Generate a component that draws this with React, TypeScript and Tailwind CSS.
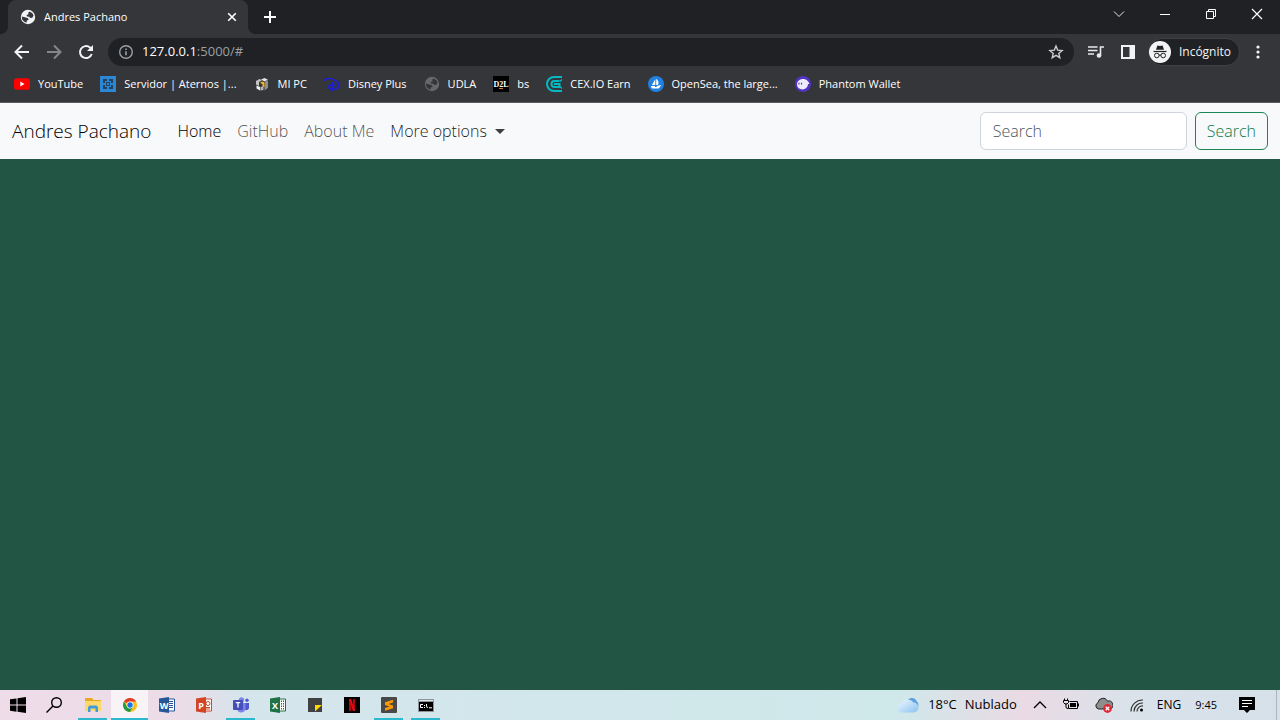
import type { ReactNode } from 'react'

type Bookmark = { label: string; icon: ReactNode }

function GlobeIcon({ className, land }: { className: string; land: string }) {
  return (
    <svg viewBox="0 0 16 16" className={className} aria-hidden="true">
      <circle cx="8" cy="8" r="7.2" fill="currentColor" />
      <path d="M9.500 2.600 12.400 4.200 13.600 6.500 12.300 8.800 10 9 9.400 7.800 7 7.600 6.600 6 8.600 5.200 8.200 3.800Z" fill={land} />
      <path d="M1.800 7.500 5 8.200 8 9.300 8.700 10.800 6.900 11.600 6.400 13.800 4 12.600 2.200 10.400Z" fill={land} />
    </svg>
  )
}

const bookmarks: Bookmark[] = [
  {
    label: 'YouTube',
    icon: (
      <svg viewBox="0 0 16 16" className="size-4">
        <rect y="2.3" width="16" height="11.4" rx="2.8" fill="#f00" />
        <path d="M6.3 5.6v4.8L10.5 8Z" fill="#fff" />
      </svg>
    ),
  },
  {
    label: 'Servidor | Aternos |...',
    icon: (
      <svg viewBox="0 0 16 16" className="size-4">
        <path d="M0 0h16v16H0Z" fill="#2b87d3" />
        <path d="M3 3h4v2H5v2H3ZM9 3h4v4h-2V5H9ZM3 9h2v2h2v2H3ZM11 9h2v4H9v-2h2ZM6 6h4v4H6Z" fill="#24405c" />
        <path d="M7 7h2v2H7Z" fill="#2b87d3" />
      </svg>
    ),
  },
  {
    label: 'MI PC',
    icon: (
      <svg viewBox="0 0 16 16" className="size-4">
        <path d="M2 5 5.500 3 8 4.200 5 6v4L2 8.500Z" fill="#c4c4c4" />
        <path d="M7 3.500 10.500 2 14 3.800 10.500 5.500Z" fill="#e4e4e4" />
        <path d="M11 5.800 14 4.200v7.600l-3.500 2.700Z" fill="#8f8f8f" />
        <path d="M2.500 9.500 6 11v3.500L2.500 12.500Z" fill="#f1f1f1" />
        <path d="M6.500 11 9.500 10v4L6.500 14.500Z" fill="#b3b3b3" />
        <path d="M6 6.500 8.500 5.500 10.500 6.500v5L8.500 10V8.200Z" fill="#f5b91f" />
      </svg>
    ),
  },
  {
    label: 'Disney Plus',
    icon: (
      <svg viewBox="0 0 16 16" className="size-4" fill="none" stroke="#1d1ddb" strokeLinecap="round">
        <path d="M1 4.800C.2 3.500 2 2.500 5 2.600c5 .2 10 3.400 10 7 0 3.200-5.500 4.600-9 3.200-2.200-.9-2.300-3 .2-3.600 2-.4 4-.2 5.300.5" strokeWidth="1.500" />
        <path d="M8.500 6.500C8 8.500 8 11.500 8.300 14.500" strokeWidth="1.500" />
      </svg>
    ),
  },
  { label: 'UDLA', icon: <GlobeIcon className="size-4 text-[#66686b]" land="#35363a" /> },
  {
    label: 'bs',
    icon: (
      <svg viewBox="0 0 16 16" className="size-4">
        <path d="M0 0h16v16H0Z" fill="#000" />
        <text x="8" y="11" fontSize="8" textAnchor="middle" fill="#fff" className="font-['Liberation_Serif',serif] font-bold">D2L</text>
        <path d="M6 12h4v1H6Z" fill="#d97920" />
      </svg>
    ),
  },
  {
    label: 'CEX.IO Earn',
    icon: (
      <svg viewBox="0 0 16 16" className="size-4" fill="none" stroke="#05b9c2" strokeWidth="2">
        <path d="M16 1H8a7 7 0 0 0 0 14h8" />
        <path d="M13.500 5H8.500a3 3 0 0 0 0 6h5V8H8" />
        <path d="M14 5.500 16 3.500M14 10.500l2 2" strokeWidth="1.500" />
      </svg>
    ),
  },
  {
    label: 'OpenSea, the large...',
    icon: (
      <svg viewBox="0 0 16 16" className="size-4">
        <circle cx="8" cy="8" r="8" fill="#2081e2" />
        <path d="M7.300 3.200v5.900H3.900ZM8.200 2.800C10.600 4.800 11.200 7 9.800 9.100H8.200ZM3 9.900h4v1h1.700v-1L13 9c-.3 1.200-1 1.700-1.500 2.500-.5.800-.9 1.100-1.600 1.100H5.500C4 12.500 3 11.500 3 9.900Z" fill="#fff" />
      </svg>
    ),
  },
  {
    label: 'Phantom Wallet',
    icon: (
      <svg viewBox="0 0 16 16" className="size-4">
        <circle cx="8" cy="8" r="8" fill="#5234c2" />
        <path d="M2 8.800C1.800 5.500 4.500 3 8 3c3.500 0 5.500 2.300 6.500 5H13c0 3-2.500 5.400-5.500 5.400-2.900 0-5.200-1.600-5.500-4.600Z" fill="#eeebfb" />
        <path d="M4 6.800v1.800M6.500 6.800v1.800" stroke="#5234c2" strokeWidth="1.200" />
      </svg>
    ),
  },
]

function TabStrip() {
  return (
    <div className="flex h-[34px] items-stretch bg-[#202124] pl-2 text-white">
      <div className="relative flex w-60 items-center gap-2 rounded-t-lg bg-[#35363a] pr-2 pl-3">
        <span className="absolute bottom-0 -left-2 size-2 bg-[radial-gradient(circle_at_0_0,#202124_8px,#35363a_8px)]" />
        <span className="absolute -right-2 bottom-0 size-2 bg-[radial-gradient(circle_at_100%_0,#202124_8px,#35363a_8px)]" />
        <GlobeIcon className="size-4 text-[#f1f3f4]" land="#35363a" />
        <span className="flex-1 truncate text-[11px]">Andres Pachano</span>
        <button aria-label="Close tab" className="flex size-4 items-center justify-center">
          <svg viewBox="0 0 16 16" className="size-4" stroke="#fff" strokeWidth="1.6">
            <path d="m4.200 4.200 7.600 7.600M11.800 4.200l-7.600 7.600" />
          </svg>
        </button>
      </div>
      <button aria-label="New tab" className="ml-3 flex w-5 items-center justify-center">
        <svg viewBox="0 0 16 16" className="size-4" stroke="#fff" strokeWidth="2">
          <path d="M8 2v12M2 8h12" />
        </svg>
      </button>
      <div className="ml-auto flex items-center pb-1.5">
        <button aria-label="Search tabs" className="flex w-[46px] justify-center">
          <svg viewBox="0 0 12 12" className="size-3" fill="none" stroke="#e4e5e7">
            <path d="m1 3.500 5 5 5-5" />
          </svg>
        </button>
        <button aria-label="Minimize" className="flex w-[46px] justify-center">
          <svg viewBox="0 0 12 12" className="size-3" stroke="#fff"><path d="M1 6.500h10" /></svg>
        </button>
        <button aria-label="Restore" className="flex w-[46px] justify-center">
          <svg viewBox="0 0 12 12" className="size-3" fill="none" stroke="#fff">
            <path d="M1.500 3.500h7v7h-7ZM3.500 3.500v-2h7v7h-2" />
          </svg>
        </button>
        <button aria-label="Close" className="flex w-[46px] justify-center">
          <svg viewBox="0 0 12 12" className="size-3" stroke="#fff" strokeWidth="1.200"><path d="m1 1 10 10M11 1 1 11" /></svg>
        </button>
      </div>
    </div>
  )
}

function Toolbar() {
  return (
    <div className="flex h-9 items-center px-3.5">
      <div className="flex items-center gap-4">
        <button aria-label="Back">
          <svg viewBox="0 0 16 16" className="size-4" fill="none" stroke="#f1f3f4" strokeWidth="2">
            <path d="M15 8H2M8 1.500 1.500 8 8 14.500" />
          </svg>
        </button>
        <button aria-label="Forward">
          <svg viewBox="0 0 16 16" className="size-4" fill="none" stroke="#85868a" strokeWidth="2">
            <path d="M1 8h13M8 1.500 14.500 8 8 14.500" />
          </svg>
        </button>
        <button aria-label="Reload">
          <svg viewBox="0 0 16 16" className="size-4" fill="none" stroke="#f1f3f4" strokeWidth="2">
            <path d="M13.700 10A6 6 0 1 1 12 3.600l2 2" />
            <path d="M15 1v6H9Z" fill="#f1f3f4" stroke="none" />
          </svg>
        </button>
      </div>
      <div className="ml-3.5 flex h-7 flex-1 items-center gap-2 rounded-full bg-[#202124] px-2.5">
        <svg viewBox="0 0 16 16" className="size-4" fill="none" stroke="#9aa0a6" strokeWidth="1.400">
          <circle cx="8" cy="8" r="6.300" />
          <path d="M8 7.200v4M8 4.500v1.500" strokeWidth="1.600" />
        </svg>
        <a href="#" className="flex-1 text-[13px] text-[#9aa0a6]">
          <span className="text-white">127.0.0.1</span>:5000/#
        </a>
        <button aria-label="Bookmark this tab">
          <svg viewBox="0 0 16 16" className="size-4" fill="none" stroke="#c9cbce" strokeWidth="1.400">
            <path d="m8 2 1.700 4.100 4.400.4-3.300 2.900 1 4.300L8 11.400l-3.800 2.300 1-4.300-3.300-2.900 4.400-.4Z" />
          </svg>
        </button>
      </div>
      <button aria-label="Media controls" className="ml-3.5">
        <svg viewBox="0 0 16 16" className="size-4" fill="none" stroke="#e8eaed" strokeWidth="1.600">
          <path d="M0 3h9.500M0 6.500h9.500M0 10h6M16 3h-3.500v8.500" />
          <circle cx="11" cy="11.500" r="2.300" fill="#e8eaed" stroke="none" />
        </svg>
      </button>
      <button aria-label="Side panel" className="ml-4">
        <svg viewBox="0 0 16 16" className="size-4">
          <path d="M1 1h14v14H1ZM3 3v10h6.500V3Z" fill="#f1f3f4" fillRule="evenodd" />
        </svg>
      </button>
      <button className="ml-3 flex h-7 items-center gap-2 rounded-full border border-[#3f4043] bg-[#202124] pr-2 text-xs text-[#f1f3f4]">
        <svg viewBox="0 0 22 22" className="size-[22px]">
          <circle cx="11" cy="11" r="11" fill="#f1f3f4" />
          <g fill="none" stroke="#202124">
            <path d="M4.500 10.500h13" strokeWidth="1.200" />
            <circle cx="7.800" cy="14.500" r="2.300" />
            <circle cx="14.200" cy="14.500" r="2.300" />
            <path d="M10 14.300q1-.8 2 0" />
          </g>
          <path d="M7 8.800 8.400 4.400l2.600.5 2.600-.5L15 8.800Z" fill="#202124" />
        </svg>
        Incógnito
      </button>
      <button aria-label="Menu" className="ml-2.5">
        <svg viewBox="0 0 16 16" className="size-4" fill="#f1f3f4">
          <circle cx="8" cy="3" r="1.600" />
          <circle cx="8" cy="8" r="1.600" />
          <circle cx="8" cy="13" r="1.600" />
        </svg>
      </button>
    </div>
  )
}

function PageNavbar() {
  return (
    <nav className="flex h-14 items-center bg-[#f8f9fa] px-3 font-light text-black/70">
      <a href="#" className="mr-[18px] text-[19px] text-black">Andres Pachano</a>
      <a href="#" className="px-2 text-black">Home</a>
      <a href="#" className="px-2">GitHub</a>
      <a href="#" className="px-2">About Me</a>
      <button className="flex items-center gap-2 px-2 text-black/90">
        More options
        <span className="border-x-5 border-t-5 border-x-transparent border-t-black/75" />
      </button>
      <form className="ml-auto flex gap-2">
        <input
          type="search"
          placeholder="Search"
          aria-label="Search"
          className="h-[38px] w-[207px] rounded-md border border-[#ced4da] bg-white px-3 placeholder:text-[#4c555d]"
        />
        <button type="button" className="h-[38px] rounded-md border border-[#198754] px-[11px] text-[#0d7a48]">Search</button>
      </form>
    </nav>
  )
}

function OfficeIcon({ letter, color, children }: { letter: string; color: string; children: ReactNode }) {
  return (
    <svg viewBox="0 0 16 16" className="size-4">
      <path d="M8 2h7.500v12H8Z" fill="#fff" stroke={color} />
      {children}
      <path d="M0 1.500 10 0v16L0 14.500Z" fill={color} />
      <text x="5" y="11.500" fontSize="9" textAnchor="middle" fill="#fff" className="font-bold">{letter}</text>
    </svg>
  )
}

const apps: { name: string; state: string; icon: ReactNode }[] = [
  {
    name: 'File Explorer',
    state: 'border-[#2bb9cf]',
    icon: (
      <svg viewBox="0 0 16 16" className="size-4">
        <path d="M0 1h7l1.500 2H16v11H0Z" fill="#e9a820" />
        <path d="M0 4h16v10H0Z" fill="#ffd86a" />
        <path d="M3 15v-5l1.500-1.500h7L13 10v5h-2.500v-3.500h-5V15Z" fill="#3f9bdc" />
      </svg>
    ),
  },
  {
    name: 'Chrome',
    state: '-mx-1 border-[#2bb9cf] bg-white/65',
    icon: (
      <svg viewBox="0 0 16 16" className="size-4">
        <circle cx="8" cy="8" r="7" fill="#fbc116" />
        <path d="M8 8 1.940 4.500A7 7 0 0 1 14.060 4.500H8Z" fill="#e33b2e" />
        <path d="M1.940 4.500A7 7 0 0 0 8 15l3-5.200L5 9.800Z" fill="#229a48" />
        <circle cx="8" cy="8" r="3.400" fill="#fff" />
        <circle cx="8" cy="8" r="2.700" fill="#1a73e8" />
      </svg>
    ),
  },
  {
    name: 'Word',
    state: 'border-transparent',
    icon: (
      <OfficeIcon letter="W" color="#285799">
        <path d="M10 4.500h4M10 6.500h4M10 8.500h4M10 10.500h4" stroke="#285799" />
      </OfficeIcon>
    ),
  },
  {
    name: 'PowerPoint',
    state: 'border-transparent',
    icon: (
      <OfficeIcon letter="P" color="#d24625">
        <circle cx="12" cy="6.500" r="2" fill="none" stroke="#d24625" />
        <path d="M10 10.500h4M10 12h4" stroke="#d24625" />
      </OfficeIcon>
    ),
  },
  {
    name: 'Teams',
    state: 'border-[#2bb9cf]',
    icon: (
      <svg viewBox="0 0 16 16" className="size-4">
        <circle cx="8.500" cy="2.800" r="2.600" fill="#7b83eb" />
        <circle cx="14" cy="3.300" r="1.700" fill="#5059c9" />
        <path d="M11 6h5v5c0 1.500-2 2.500-4 2Z" fill="#5059c9" />
        <path d="M4 6h8.500v5.500c0 5-8.500 5.500-8.500 0Z" fill="#7b83eb" />
        <rect y="3" width="10" height="10" rx="1" fill="#464eb8" />
        <path d="M2.800 5.600h4.400M5 5.600v5" stroke="#fff" strokeWidth="1.300" />
      </svg>
    ),
  },
  {
    name: 'Excel',
    state: 'border-transparent',
    icon: (
      <OfficeIcon letter="X" color="#207245">
        <path d="M11.500 3.500v9M13.500 3.500v9" stroke="#207245" strokeDasharray="1.500 1" />
      </OfficeIcon>
    ),
  },
  {
    name: 'Sticky Notes',
    state: 'border-transparent',
    icon: (
      <svg viewBox="0 0 16 16" className="size-4">
        <path d="M1 1h14v14H1Z" fill="#414141" />
        <path d="M8 8h7l-7 6.500Z" fill="#ffd800" />
      </svg>
    ),
  },
  {
    name: 'Netflix',
    state: 'border-transparent',
    icon: (
      <svg viewBox="0 0 16 16" className="size-4">
        <path d="M0 0h16v16H0Z" fill="#000" />
        <path d="M5 2h2.200v12H5ZM8.800 2H11v12H8.800Z" fill="#b1060f" />
        <path d="M5 2h2.200L11 14H8.800Z" fill="#e50914" />
      </svg>
    ),
  },
  {
    name: 'Sublime Text',
    state: 'border-[#2bb9cf]',
    icon: (
      <svg viewBox="0 0 16 16" className="size-4">
        <rect width="16" height="16" rx="1" fill="#484848" />
        <path d="M4 5.200 12 2.700v2.800L7.500 7 12 8.500v2.700L4 13.700V11l4.500-1.500L4 8Z" fill="#ff9800" />
      </svg>
    ),
  },
  {
    name: 'Command Prompt',
    state: 'border-[#2bb9cf]',
    icon: (
      <svg viewBox="0 0 16 16" className="size-4">
        <path d="M0 2h16v13H0Z" fill="#8d949b" />
        <path d="M1 3h14v1H1Z" fill="#dfe5ea" />
        <path d="M1 5h14v9H1Z" fill="#000" />
        <path d="M5 7.500H2.500v3H5M6.500 8v1M6.500 10v1M8.500 7v2l1 2M11 10.800h3" stroke="#fff" fill="none" />
      </svg>
    ),
  },
]

function Taskbar() {
  return (
    <footer className="flex h-[30px] items-stretch bg-[linear-gradient(90deg,#eedde8_0%,#ecdce7_14%,#d5e5ec_19%,#d2e7ec_40%,#cfe8ea_70%,#eadae4_80%,#dae2ea_88%,#d5e0e9_100%)] text-black">
      <button aria-label="Start" className="flex w-9 items-center justify-center">
        <svg viewBox="0 0 16 16" className="size-4">
          <path d="M0 2.300 6.500 1.400v6.200H0ZM7.500 1.200 16 0v7.600H7.500ZM0 8.500h6.500v6.200L0 13.800ZM7.500 8.500H16V16l-8.500-1.200Z" />
        </svg>
      </button>
      <button aria-label="Search" className="flex w-9 items-center justify-center">
        <svg viewBox="0 0 16 16" className="size-4" fill="none" stroke="#000" strokeWidth="1.400">
          <circle cx="10.500" cy="5.500" r="4.800" />
          <path d="M7 9 .5 15.500" />
        </svg>
      </button>
      <div className="ml-0.5 flex">
        {apps.map((app) => (
          <button key={app.name} aria-label={app.name} className="flex w-[37px] items-stretch px-1">
            <span className={`flex flex-1 items-center justify-center border-b-2 pt-0.5 ${app.state}`}>{app.icon}</span>
          </button>
        ))}
      </div>
      <div className="ml-auto flex items-center">
        <button className="flex items-center gap-2 text-[13px]">
          <svg viewBox="0 0 24 18" className="h-[18px] w-6">
            <defs>
              <linearGradient id="cloud" x2="1" y2="1">
                <stop stopColor="#eef9ff" />
                <stop offset="1" stopColor="#8bc1ef" />
              </linearGradient>
            </defs>
            <path d="M11 6a5 5 0 0 1 9.500-1 5 5 0 0 1 0 8Z" fill="#5b9fe0" />
            <path d="M6 16.500a4.700 4.700 0 0 1-.5-9.300A7 7 0 0 1 17.500 6.500 5 5 0 0 1 17.500 16.500Z" fill="url(#cloud)" />
          </svg>
          <span>18°C</span>
          <span>Nublado</span>
        </button>
        <button aria-label="Show hidden icons" className="ml-4">
          <svg viewBox="0 0 14 14" className="size-3.5" fill="none" stroke="#000" strokeWidth="1.300"><path d="m1 10 6-6 6 6" /></svg>
        </button>
        <svg viewBox="0 0 16 16" className="ml-4 size-4" fill="none" stroke="#000">
          <path d="M1.500 1.500v2M4.500 1.500v2M3 6.500V10q0 1.500 2 1.500M6.500 4.500h8v7H5.500V7.500" />
          <path d="M.5 3.500h5V5.500L4 7H2L.5 5.500Z" />
          <path d="M7 6h6v4H7ZM15 6.500h1v3h-1Z" fill="#000" stroke="none" />
        </svg>
        <svg viewBox="0 0 18 16" className="ml-4 h-4 w-[18px]">
          <path d="M3.500 12a3.300 3.300 0 0 1-.5-6.300 5 5 0 0 1 9.500-1.500 4 4 0 0 1 2.500 7.800Z" fill="#8d8d8d" stroke="#222" />
          <circle cx="12.500" cy="11.500" r="4.400" fill="#df2634" />
          <path d="m10.700 9.700 3.600 3.600M14.300 9.700l-3.600 3.600" stroke="#fff" strokeWidth="1.300" />
        </svg>
        <svg viewBox="0 0 16 16" className="ml-4 size-4" fill="none" stroke="#333" strokeWidth="1.200">
          <path d="M2 14.500A11.500 11.500 0 0 1 14 3M5 14.500a8.500 8.500 0 0 1 9-8.500M8 14.500A5.500 5.500 0 0 1 14 9" />
          <circle cx="12.500" cy="13" r="1.500" fill="#000" stroke="none" />
        </svg>
        <button className="ml-3 text-xs">ENG</button>
        <time className="ml-3.5 text-[11px]">9:45</time>
        <button aria-label="Notifications" className="ml-[22px]">
          <svg viewBox="0 0 16 16" className="size-4">
            <path d="M0 0h16v13h-5l-3 3-3-3H0Z" />
            <path d="M3 3.500h10M3 6.500h10M3 9.500h6" stroke="#fff" />
          </svg>
        </button>
        <div className="ml-[21px] h-full w-1 border-l border-[#a9b4bd]" />
      </div>
    </footer>
  )
}

export default function App() {
  return (
    <div className="flex min-h-screen flex-col font-['Open_Sans','Noto_Sans',sans-serif]">
      <header className="border-b border-[#5c5d61] bg-[#35363a]">
        <TabStrip />
        <Toolbar />
        <div className="flex h-8 items-center gap-[17px] px-3.5 pb-1 text-[11px] text-white">
          {bookmarks.map((b) => (
            <a key={b.label} href="#" className="flex shrink-0 items-center gap-2">
              {b.icon}
              {b.label}
            </a>
          ))}
        </div>
      </header>
      <PageNavbar />
      <main className="flex-1 bg-[#225544]" />
      <Taskbar />
    </div>
  )
}
